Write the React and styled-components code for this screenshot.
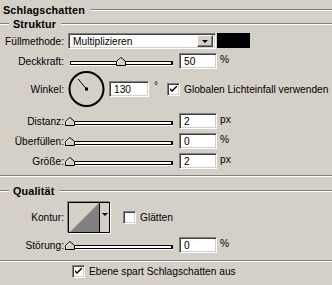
import React from "react";
import styled, { createGlobalStyle } from "styled-components";

const Global = createGlobalStyle`
  html, body { margin: 0; padding: 0; background: #d4d0c8; }
  body { font-family: "Liberation Sans", Arial, sans-serif; font-size: 10.2px; color: #000; }
`;

const Panel = styled.div`
  width: 332px;
  height: 285px;
  background: #d4d0c8;
  padding-top: 3px;
  box-sizing: border-box;
  display: flex;
  flex-direction: column;
  overflow: hidden;
`;

const TitleRow = styled.div`
  display: flex;
  align-items: center;
  height: ${(p) => p.$h}px;
  padding-left: ${(p) => (p.$indent ? 0 : 3)}px;
  margin-top: ${(p) => p.$mt || 0}px;
`;

const Etch = styled.div`
  border-top: 1px solid #808080;
  border-bottom: 1px solid #ffffff;
  flex: ${(p) => (p.$w ? `0 0 ${p.$w}px` : "1")};
  margin-left: ${(p) => p.$ml || 0}px;
  height: 0;
`;

const TitleText = styled.span`
  font-weight: bold;
  font-size: 10.8px;
  margin-left: ${(p) => p.$ml || 0}px;
  letter-spacing: 0.15px;
`;

const Separator = styled.div`
  border-top: 1px solid #808080;
  border-bottom: 1px solid #ffffff;
  margin-top: ${(p) => p.$mt}px;
`;

const Row = styled.div`
  display: flex;
  align-items: center;
  height: ${(p) => p.$h}px;
  margin-top: ${(p) => p.$mt}px;
`;

const Label = styled.div`
  width: 64px;
  text-align: right;
  margin-right: 4px;
  white-space: nowrap;
  flex: 0 0 64px;
`;

const Sunken = styled.div`
  background: #fff;
  box-sizing: border-box;
  border-top: 1px solid #808080;
  border-left: 1px solid #808080;
  border-right: 1px solid #ffffff;
  border-bottom: 1px solid #ffffff;
  box-shadow: inset 1px 1px 0 #404040, inset -1px -1px 0 #d4d0c8;
`;

const Select = styled(Sunken)`
  width: 148px;
  height: 16px;
  display: flex;
  align-items: center;
  justify-content: space-between;
  padding-left: 4px;
  padding-right: 2px;
`;

const ArrowBtn = styled.div`
  width: 16px;
  height: 12px;
  box-sizing: border-box;
  background: #d4d0c8;
  border-top: 1px solid #ffffff;
  border-left: 1px solid #ffffff;
  border-right: 1px solid #404040;
  border-bottom: 1px solid #404040;
  box-shadow: inset -1px -1px 0 #808080;
  display: flex;
  align-items: center;
  justify-content: center;
`;

const Tri = styled.div`
  width: 0;
  height: 0;
  border-left: 3px solid transparent;
  border-right: 3px solid transparent;
  border-top: 3px solid #000;
`;

const Swatch = styled.div`
  width: 33px;
  height: 15px;
  background: #000;
  margin-left: 1px;
  margin-top: -1px;
`;

const NumInput = styled(Sunken)`
  width: ${(p) => p.$w || 38}px;
  height: 16px;
  padding-left: 4px;
  display: flex;
  align-items: center;
  margin-left: ${(p) => p.$ml || 0}px;
`;

const Unit = styled.span`
  margin-left: 3px;
  margin-top: -4px;
`;

const SliderBox = styled.div`
  position: relative;
  width: 105px;
  height: 16px;
  display: flex;
  align-items: center;
  margin-right: 6px;
`;

const Track = styled.div`
  flex: 1;
  margin-left: 2px;
  margin-top: 3px;
  height: 2px;
  background: #fff;
  border: 1px solid #000;
  border-right: 2px solid #000;
  box-shadow: 0 1px 0 #fff;
`;

const ThumbSvg = styled.svg`
  position: absolute;
  top: 4px;
`;

function Slider({ value }) {
  const left = 2 + (value / 100) * 101 - 5;
  return (
    <SliderBox>
      <Track />
      <ThumbSvg width="11" height="9" viewBox="0 0 11 9" style={{ left }}>
        <polygon points="0.5,8.5 0.5,4.5 5,0.5 9.5,4.5 9.5,8.5" fill="#d4d0c8" stroke="#000" />
        <polyline points="1.5,7.5 1.5,4.9 5,1.8" fill="none" stroke="#fff" />
      </ThumbSvg>
    </SliderBox>
  );
}

const Dial = styled.svg`
  display: block;
  margin-right: 3px;
`;

const CheckBox = styled(Sunken)`
  width: 13px;
  height: 13px;
  display: flex;
  align-items: center;
  justify-content: center;
  margin-left: ${(p) => p.$ml || 0}px;
  margin-right: 4px;
  flex: 0 0 13px;
`;

function Check({ checked, ml }) {
  return (
    <CheckBox $ml={ml}>
      {checked && (
        <svg width="7" height="7" viewBox="0 0 7 7">
          <path d="M0 2 L0 4 L2 6 L7 1 L7 -1 L2 4 Z" fill="#000" />
        </svg>
      )}
    </CheckBox>
  );
}

const Degree = styled.span`
  margin-left: 5px;
  margin-top: -7px;
  margin-right: 9px;
  font-size: 10px;
`;

const ContourBox = styled.div`
  width: 42px;
  height: 31px;
  box-sizing: border-box;
  border: 1px solid #000;
  box-shadow: -1px -1px 0 #808080, 1px 1px 0 #fff;
  display: flex;
`;

const ContourPreview = styled.svg`
  display: block;
  flex: 0 0 30px;
  border-right: 1px solid #000;
`;

const ContourArrow = styled.div`
  flex: 1;
  display: flex;
  justify-content: center;
  padding-top: 10px;
`;

const Text = styled.span`
  white-space: nowrap;
`;

export default function App() {
  const a = (130 * Math.PI) / 180;
  const cx = 18.5, cy = 19;
  const lx = cx + Math.cos(a) * 13;
  const ly = cy - Math.sin(a) * 13;
  return (
    <Panel>
      <Global />
      <TitleRow $h={14}>
        <TitleText>Schlagschatten</TitleText>
        <Etch $ml={6} />
      </TitleRow>
      <TitleRow $h={13} $indent>
        <Etch $w={9} />
        <TitleText $ml={4}>Struktur</TitleText>
        <Etch $ml={5} />
      </TitleRow>

      <Row $h={16} $mt={3}>
        <Label>Füllmethode:</Label>
        <Select>
          <Text>Multiplizieren</Text>
          <ArrowBtn><Tri /></ArrowBtn>
        </Select>
        <Swatch />
      </Row>

      <Row $h={16} $mt={4}>
        <Label>Deckkraft:</Label>
        <Slider value={50} />
        <NumInput>50</NumInput>
        <Unit>%</Unit>
      </Row>

      <Row $h={38} $mt={1}>
        <Label>Winkel:</Label>
        <Dial width="38" height="38" viewBox="0 0 38 38">
          <circle cx={cx} cy={cy} r="17" fill="none" stroke="#000" strokeWidth="2" />
          <line x1={cx} y1={cy} x2={lx} y2={ly} stroke="#000" strokeWidth="1" />
          <rect x={cx - 1.5} y={cy - 1.5} width="3" height="3" fill="#000" />
        </Dial>
        <NumInput $w={40}>130</NumInput>
        <Degree>°</Degree>
        <Check checked />
        <Text>Globalen Lichteinfall verwenden</Text>
      </Row>

      <Row $h={16} $mt={5}>
        <Label>Distanz:</Label>
        <Slider value={0} />
        <NumInput>2</NumInput>
        <Unit>px</Unit>
      </Row>
      <Row $h={16} $mt={4}>
        <Label>Überfüllen:</Label>
        <Slider value={0} />
        <NumInput>0</NumInput>
        <Unit>%</Unit>
      </Row>
      <Row $h={16} $mt={4}>
        <Label>Größe:</Label>
        <Slider value={0} />
        <NumInput>2</NumInput>
        <Unit>px</Unit>
      </Row>

      <Separator $mt={6} />

      <TitleRow $h={14} $indent $mt={7}>
        <Etch $w={9} />
        <TitleText $ml={4}>Qualität</TitleText>
        <Etch $ml={5} />
      </TitleRow>

      <Row $h={31} $mt={4}>
        <Label>Kontur:</Label>
        <ContourBox>
          <ContourPreview width="30" height="29" viewBox="0 0 30 29">
            <polygon points="1,29 30,0 30,29" fill="#808080" />
          </ContourPreview>
          <ContourArrow><Tri /></ContourArrow>
        </ContourBox>
        <Check ml={13} />
        <Text>Glätten</Text>
      </Row>

      <Row $h={16} $mt={4}>
        <Label>Störung:</Label>
        <Slider value={0} />
        <NumInput>0</NumInput>
        <Unit>%</Unit>
      </Row>

      <Separator $mt={7} />

      <Row $h={14} $mt={2}>
        <Check checked ml={72} />
        <Text>Ebene spart Schlagschatten aus</Text>
      </Row>
    </Panel>
  );
}
